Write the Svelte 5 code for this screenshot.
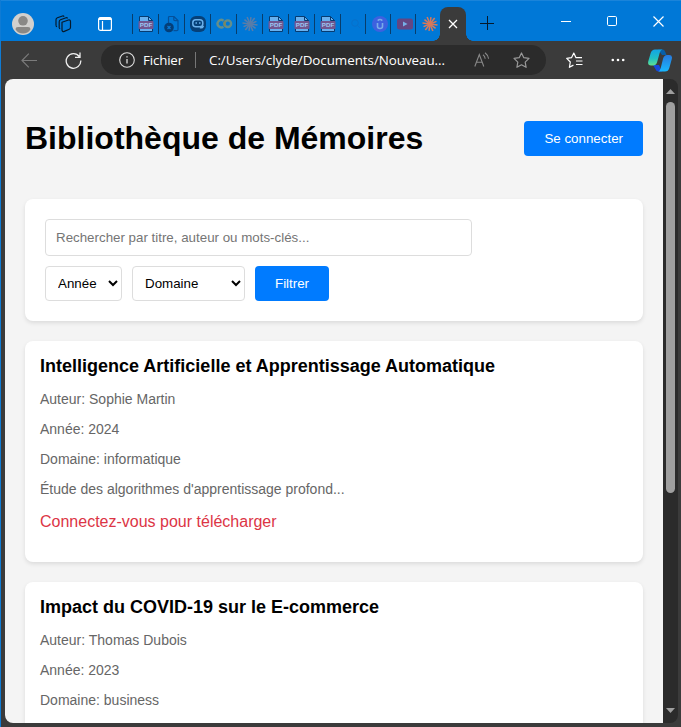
<script>
  const tabs = ['pdf', 'doc', 'bot', 'colab', 'burst', 'pdf', 'pdf', 'pdf', 'search', 'u', 'video', 'claude'];
  const rays = Array.from({ length: 12 }, (_, i) => i * 30);
  const theses = [
    {
      title: 'Intelligence Artificielle et Apprentissage Automatique',
      author: 'Sophie Martin',
      year: 2024,
      field: 'informatique',
      summary: "Étude des algorithmes d'apprentissage profond...",
      notice: 'Connectez-vous pour télécharger'
    },
    {
      title: 'Impact du COVID-19 sur le E-commerce',
      author: 'Thomas Dubois',
      year: 2023,
      field: 'business'
    }
  ];
</script>

<div class="window">
  <header class="titlebar">
    <svg class="avatar" width="22" height="22" viewBox="0 0 22 22">
      <circle cx="11" cy="11" r="11" fill="#d2d0ce" />
      <circle cx="11" cy="7.8" r="4.8" fill="#8a8886" />
      <path d="M3.5 16.2Q3.5 14 6 14h10q2.500 0 2.500 2.200Q16 20.500 11 20.500T3.500 16.200Z" fill="#8a8886" />
    </svg>
    <svg class="spaces" width="18" height="18" viewBox="0 0 18 18" fill="none" stroke="#051a2c" stroke-width="1.200" stroke-linejoin="round">
      <path d="M8 7.200 14.500 5q2-.4 2 1.400v5.800q0 1.500-1.200 2l-5 2.200q-2 .6-2.300-1.200Z" />
      <path d="M5.200 13V6.800q0-1.500 1.300-2L12 2.800q1-.3 1.600.6M2 10.800V4.800q0-1.400 1.400-2L8.500 1q1-.3 1.700.6M2 10.800l.8 1M5.200 13l.8 1" />
    </svg>
    <svg class="panel" width="14" height="14" viewBox="0 0 14 14" fill="none" stroke="#fff" stroke-width="1.200">
      <rect x=".6" y=".6" width="12.800" height="12.800" rx="2" />
      <path d="M1 2.500h12M4.500 4v9" /><path d="M1 1.800h12" stroke-width="2.400" />
    </svg>
    <div class="tabs">
      {#each tabs as kind, i}
        <div class="tab" class:narrow={i > 7}>
          {#if kind === 'pdf'}
            <svg width="16" height="18" viewBox="0 0 16 18">
              <path d="M1.500 1.500h9l4 4v11h-13Z" fill="#68b0ee" stroke="#073b70" />
              <path d="M10.500 1.500v4h4" fill="none" stroke="#073b70" />
              <rect x=".5" y="6" width="15" height="8" rx="1" fill="#71568f" />
              <text x="8" y="12.300" text-anchor="middle" font-size="6.200" font-weight="700" fill="#9cc8f3">PDF</text>
            </svg>
          {:else if kind === 'doc'}
            <svg width="16" height="18" viewBox="0 0 16 18">
              <path d="M4.500 8V2.600q0-1.100 1.100-1.100H10l4 4v9q0 1.200-1.200 1.200H9.500M9.800 1.500v3q0 1.200 1.200 1.200h3" fill="none" stroke="#04509a" stroke-width="1.200" />
              <circle cx="5" cy="12.500" r="4.800" fill="#043e78" />
              <path d="m3.500 11 3 3m0-3-3 3" stroke="#0878d5" stroke-width="1.200" />
            </svg>
          {:else if kind === 'bot'}
            <svg width="18" height="18" viewBox="0 0 18 18">
              <rect x="1" y="1" width="16" height="16" rx="6" fill="#064078" />
              <rect x="3.800" y="4.800" width="10" height="7" rx="3" fill="none" stroke="#6ab1ec" stroke-width="1.500" />
              <path d="M6.500 8h1.500M10 8h1.500M11 12.500q2 1 3.500-1.500" fill="none" stroke="#6ab1ec" stroke-width="1.500" />
            </svg>
          {:else if kind === 'colab'}
            <svg width="17" height="12" viewBox="0 0 17 12" fill="none" stroke-width="2.400">
              <path d="M7.500 2.700A3.700 3.700 0 1 0 7.500 8.700" stroke="#648e8a" />
              <circle cx="11.800" cy="5.700" r="3.300" stroke="#648e8a" />
              <path d="M9.400 8.100a3.300 3.300 0 0 1 0-4.700" stroke="#7b8761" />
            </svg>
          {:else if kind === 'burst' || kind === 'claude'}
            <svg width="16" height="16" viewBox="-8 -8 16 16" stroke={kind === 'claude' ? '#d97959' : '#5b7da8'} stroke-width="1.500">
              {#each rays as angle, r}
                <path d={r % 2 ? 'M0 0V-7.600' : 'M0 0V-7'} transform="rotate({angle + 8})" />
              {/each}
            </svg>
          {:else if kind === 'search'}
            <svg width="12" height="12" viewBox="0 0 12 12" fill="none" stroke="#0870ca">
              <circle cx="6" cy="5" r="3.300" /><path d="m8.500 7.500 2.500 2.500" />
            </svg>
          {:else if kind === 'u'}
            <svg width="16" height="16" viewBox="0 0 16 16">
              <circle cx="8" cy="8" r="8" fill="#3d61df" />
              <path d="M5.500 7v3.500q0 2 2.500 2t2.500-2V7M5.700 4.600Q8 2.400 10.300 4.600" fill="none" stroke="#79ace9" stroke-width="1.600" />
            </svg>
          {:else}
            <svg width="16" height="12" viewBox="0 0 16 12">
              <rect y=".5" width="16" height="11" rx="2.500" fill="#634683" />
              <path d="m6 3.500 4.500 2.500L6 8.500Z" fill="#77afe6" />
            </svg>
          {/if}
        </div>
      {/each}
      <div class="active">
        <svg width="10" height="10" viewBox="0 0 10 10" stroke="#fff" stroke-width="1.300"><path d="m1 1 8 8m0-8-8 8" /></svg>
      </div>
    </div>
    <svg class="plus" width="14" height="14" viewBox="0 0 14 14" stroke="#051a2c"><path d="M0 7.500h14M7.500 0v14" /></svg>
    <div class="controls">
      <svg width="10" height="10" viewBox="0 0 10 10" stroke="#fff"><path d="M0 5.500h10" /></svg>
      <svg width="10" height="10" viewBox="0 0 10 10" fill="none" stroke="#fff"><rect x=".5" y=".5" width="9" height="9" rx="1.200" /></svg>
      <svg width="11" height="11" viewBox="0 0 11 11" stroke="#fff" stroke-width="1.200"><path d="m.5.5 10 10m0-10-10 10" /></svg>
    </div>
  </header>

  <nav class="toolbar">
    <svg class="back" width="17" height="15" viewBox="0 0 17 15" fill="none" stroke="#7b7b7b" stroke-width="1.200"><path d="M16 7.500H1M7.800.7 1 7.500l6.800 6.800" /></svg>
    <svg class="reload" width="17" height="17" viewBox="0 0 17 17" fill="none" stroke="#eee" stroke-width="1.300"><path d="M14.300 4.500a7.300 7.300 0 1 0 1.500 4M15 .5v4.800h-5" /></svg>
    <div class="address">
      <svg class="info" width="16" height="16" viewBox="0 0 16 16" fill="none" stroke="#ddd" stroke-width="1.100"><circle cx="8" cy="8" r="7.300" /><path d="M8 7v4.500M8 4.200v1.400" stroke-width="1.300" /></svg>
      <span class="scheme">Fichier</span>
      <span class="bar"></span>
      <span class="url">C:/Users/clyde/Documents/Nouveau...</span>
      <svg class="aloud" width="17" height="16" viewBox="0 0 17 16" fill="none" stroke="#898989" stroke-width="1.100"><path d="m.8 14.500 4.500-12 4.500 12M2.500 10.300h5.700M9 2.800q2 1.500 2.200 4M11 .8q3.300 2.500 3.600 6" /></svg>
      <svg class="star" width="17" height="17" viewBox="0 0 17 17" fill="none" stroke="#999" stroke-width="1.200" stroke-linejoin="round"><path d="m8.500 1 2.300 4.700 5.200.7-3.800 3.700.9 5.200-4.600-2.500-4.600 2.500.9-5.200L1 6.400l5.200-.7Z" /></svg>
    </div>
    <svg class="favs" width="17" height="17" viewBox="0 0 17 17" fill="none" stroke="#fff" stroke-width="1.200" stroke-linejoin="round"><path d="M11.200 5.700H10L7.800 1 5.500 5.700l-4.800.7 3.600 3.600-.9 5.300 4-2.200M10 5.700h6M10 9h6.500M10 12.500h6.500" /></svg>
    <svg class="dots" width="14" height="4" viewBox="0 0 14 4" fill="#fff"><circle cx="1.800" cy="2" r="1.300" /><circle cx="7" cy="2" r="1.300" /><circle cx="12.200" cy="2" r="1.300" /></svg>
    <svg class="copilot" width="24" height="23" viewBox="0 0 24 23">
      <defs>
        <linearGradient id="left" x1="0" y1="0" x2="0" y2="1"><stop offset="0" stop-color="#12a4e6" /><stop offset=".55" stop-color="#20bfc5" /><stop offset="1" stop-color="#60df91" /></linearGradient>
        <linearGradient id="right" x1="0" y1="0" x2="0" y2="1"><stop offset="0" stop-color="#2878dc" /><stop offset="1" stop-color="#18b8ff" /></linearGradient>
      </defs>
      <path d="M10 .5h4.500q2 0 2.700 2.200L18.500 6H14Z" fill="#075fa8" />
      <path d="M5 16h6l3 6.500h-3.500q-2.200 0-3-2.200Z" fill="#1747da" />
      <path d="M7 .5h7.500q-2 .5-2.700 3L9 13.500q-1 3-4 3H3q-3.500 0-2.800-4L2.700 4Q3.800.5 7 .5Z" fill="url(#left)" />
      <path d="M17 22.500H10q1.800-.5 2.600-3l2.500-10q1-3.500 4-3.500h2q3.700 0 2.700 4L21.300 19q-1 3.500-4.300 3.500Z" fill="url(#right)" />
    </svg>
  </nav>

  <div class="viewport">
    <main>
      <div class="heading">
        <h1>Bibliothèque de Mémoires</h1>
        <button>Se connecter</button>
      </div>
      <form class="filters">
        <input type="text" placeholder="Rechercher par titre, auteur ou mots-clés..." />
        <select class="year"><option>Année</option></select>
        <select class="field"><option>Domaine</option></select>
        <button type="button">Filtrer</button>
      </form>
      {#each theses as t}
        <article>
          <h3>{t.title}</h3>
          <p>Auteur: {t.author}</p>
          <p>Année: {t.year}</p>
          <p>Domaine: {t.field}</p>
          {#if t.summary}<p>{t.summary}</p>{/if}
          {#if t.notice}<div class="login">{t.notice}</div>{/if}
        </article>
      {/each}
    </main>
    <div class="scrollbar">
      <svg width="9" height="5" viewBox="0 0 9 5" fill="#9f9f9f"><path d="M4.500 0 9 5H0Z" /></svg>
      <div class="thumb"></div>
      <svg class="down" width="9" height="5" viewBox="0 0 9 5" fill="#9f9f9f"><path d="M4.500 5 9 0H0Z" /></svg>
    </div>
  </div>
</div>

<style>
  :global(body) { overflow: hidden; }
  .window { box-sizing: border-box; width: 681px; height: 727px; display: flex; flex-direction: column; background: #3b3b3b; border-left: 1px solid #0f7bd4; font-family: "Liberation Sans", Arial, sans-serif; overflow: hidden; }
  svg { display: block; flex: none; }
  .titlebar { box-sizing: border-box; height: 41px; flex: none; display: flex; background: #0078d7; border-top: 1px solid #1a84da; padding-left: 11px; }
  .avatar { margin-top: 12px; }
  .spaces { margin: 14px 0 0 20px; }
  .panel { margin: 16px 0 0 26px; }
  .tabs { display: flex; margin-left: 20px; }
  .tab { box-sizing: border-box; width: 26px; height: 20px; margin-top: 13px; border-left: 1px solid #083d6b; display: flex; align-items: center; justify-content: center; padding-left: 1px; }
  .tab.narrow { width: 25px; padding-left: 4px; }
  .active { position: relative; width: 26px; height: 34px; margin: 6px 0 0 0; border-radius: 8px 8px 0 0; background: #3b3b3b; display: flex; align-items: center; justify-content: center; }
  .active::before, .active::after { content: ''; position: absolute; bottom: 0; width: 7px; height: 7px; }
  .active::before { left: -7px; background: radial-gradient(circle at 0 0, transparent 6.5px, #3b3b3b 7px); }
  .active::after { right: -7px; background: radial-gradient(circle at 100% 0, transparent 6.5px, #3b3b3b 7px); }
  .plus { margin: 15px 0 0 14px; }
  .controls { display: flex; gap: 36px; margin: 15px 17px 0 auto; }
  .toolbar { height: 38px; flex: none; display: flex; align-items: center; padding-left: 20px; }
  .reload { margin-left: 27px; }
  .address { box-sizing: border-box; flex: none; width: 445px; height: 30px; margin-left: 19px; padding-left: 18px; border-radius: 15px; background: #2b2b2b; color: #fff; display: flex; align-items: center; font: 13.5px "Open Sans", "Noto Sans", sans-serif; white-space: nowrap; }
  .scheme { width: 42px; margin-left: 8px; font-size: 13.3px; letter-spacing: -.15px; }
  .bar { width: 1px; height: 16px; margin: 0 13px 0 10px; background: #777; }
  .url { width: 252px; font-size: 13.4px; letter-spacing: -.05px; }
  .aloud { margin-left: 13px; }
  .star { margin-left: 22px; }
  .favs { margin-left: 20px; }
  .dots { margin-left: 28px; }
  .copilot { margin-left: 23px; }
  .viewport { width: 673px; height: 644px; margin-left: 4px; flex: none; display: flex; border-radius: 8px; overflow: hidden; background: #2b2b2b; }
  main { box-sizing: border-box; width: 658px; padding: 20px; background: #f4f4f4; overflow: hidden; }
  .heading { height: 79px; display: flex; align-items: center; justify-content: space-between; margin-bottom: 21px; }
  h1 { margin: 0; font-size: 32px; line-height: 37px; color: #000; }
  button { height: 35px; padding: 0 20px; border: 0; border-radius: 4px; background: #007bff; color: #fff; font: 13.333px "Liberation Sans", Arial, sans-serif; }
  .filters { box-sizing: border-box; height: 122px; padding: 20px; display: flex; flex-wrap: wrap; gap: 10px; align-content: flex-start; background: #fff; border-radius: 8px; box-shadow: 0 2px 4px rgba(0, 0, 0, .1); }
  input, select { box-sizing: border-box; border: 1px solid #ddd; border-radius: 4px; background: #fff; color: #000; font: 13.333px "Liberation Sans", Arial, sans-serif; }
  input { width: 427px; height: 37px; padding: 10px; margin-right: 100px; }
  input::placeholder { color: #757575; }
  select { height: 35px; padding: 0 0 0 8px; }
  .year { width: 77px; }
  .field { width: 113px; }
  article { box-sizing: border-box; height: 221px; margin-top: 20px; padding: 15px; background: #fff; border-radius: 8px; box-shadow: 0 2px 4px rgba(0, 0, 0, .1); }
  h3 { margin: 0 0 15px; font-size: 18px; line-height: 20px; color: #000; }
  p { margin: 0 0 14px; font-size: 14px; line-height: 16px; color: #666; }
  .login { margin-top: 16px; font-size: 16px; line-height: 18px; color: #dc3545; }
  .scrollbar { width: 15px; display: flex; flex-direction: column; align-items: center; padding-top: 10px; box-sizing: border-box; }
  .thumb { width: 9px; height: 391px; margin-top: 8px; border-radius: 5px; background: #9f9f9f; }
  .down { margin: auto 0 10px; }
</style>
